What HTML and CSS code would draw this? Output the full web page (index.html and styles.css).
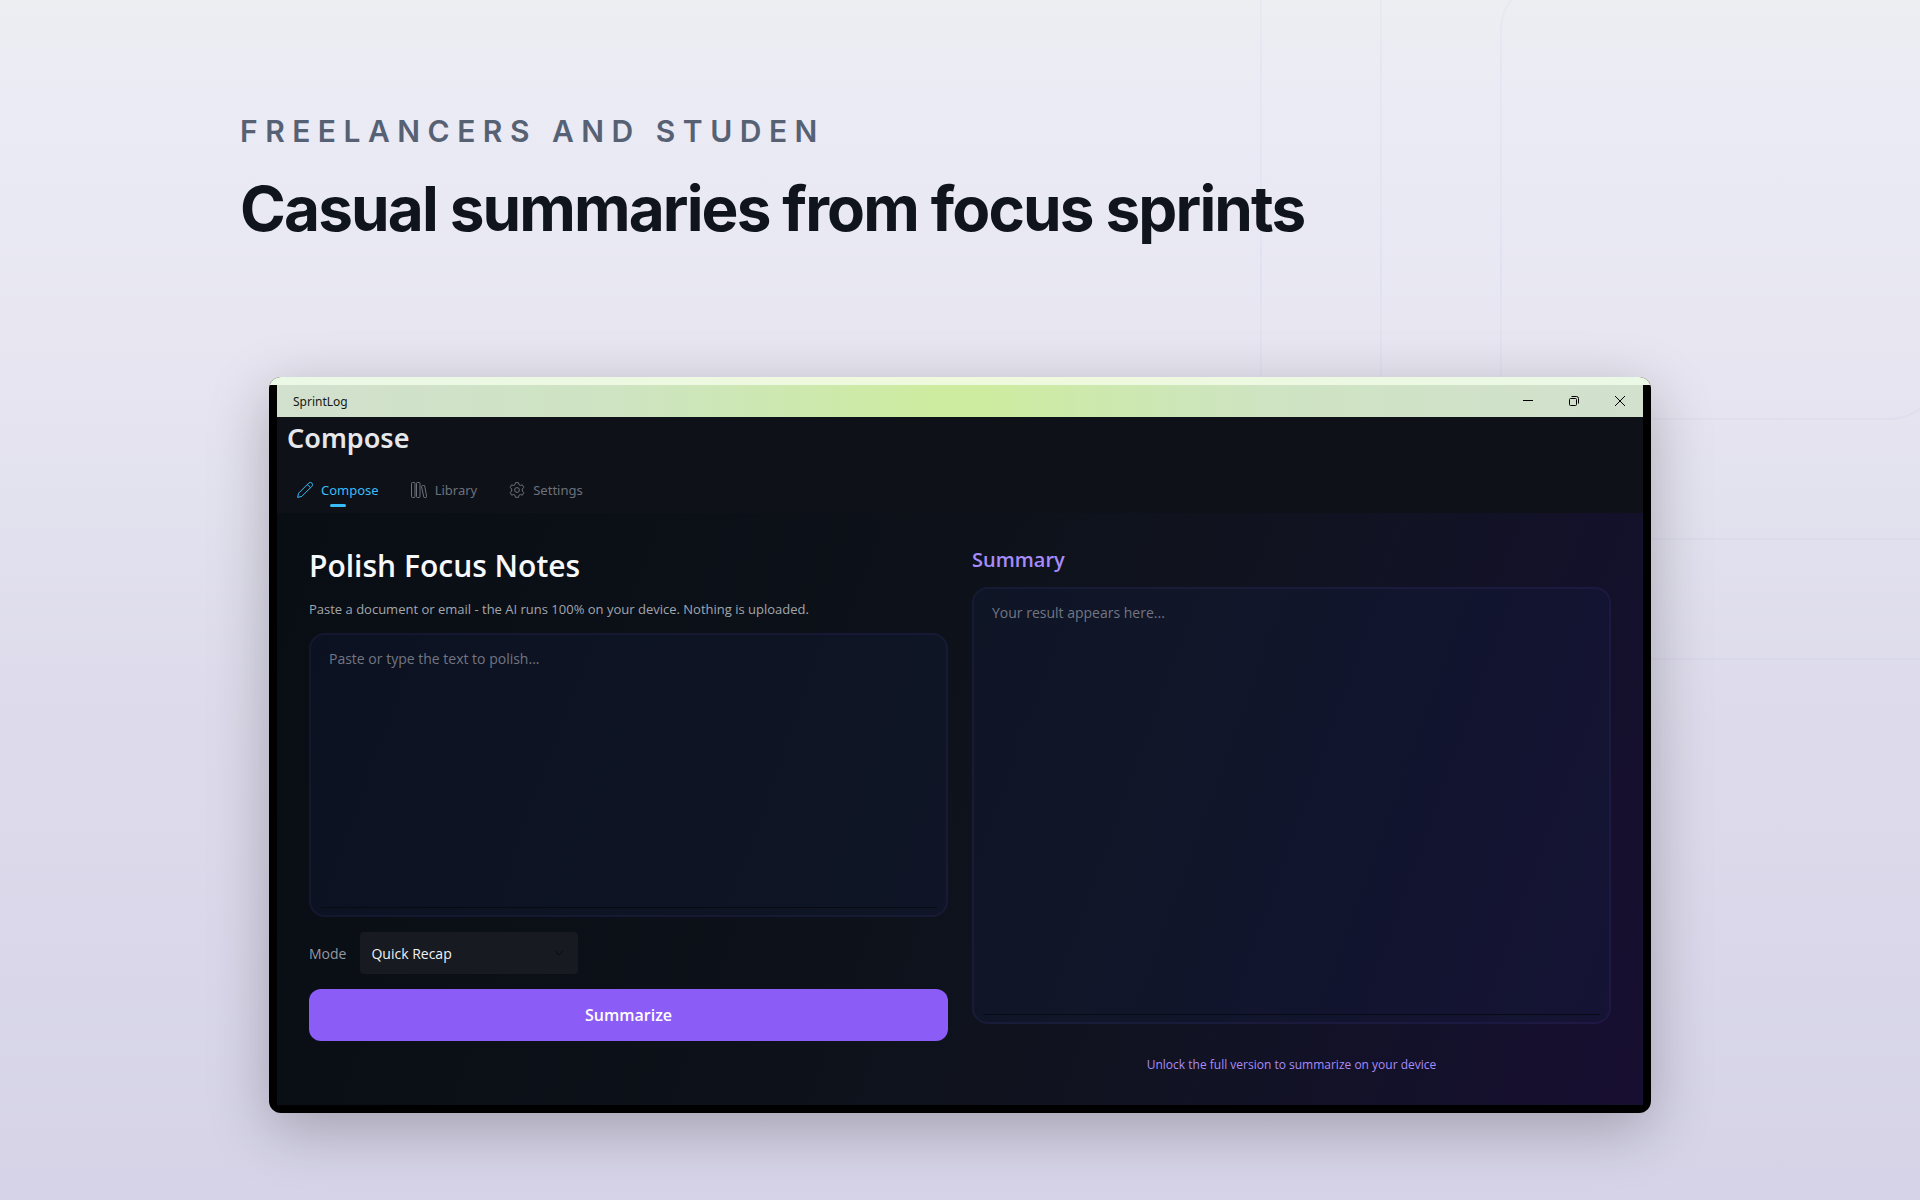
FILE: index.html
```html
<!DOCTYPE html>
<html lang="en">
<head>
<meta charset="utf-8">
<meta name="viewport" content="width=device-width, initial-scale=1">
<title>SprintLog</title>
<link rel="stylesheet" href="styles.css">
</head>
<body>
<div class="page">
  <div class="rings" aria-hidden="true"></div>
  <header class="intro">
    <p class="eyebrow">FREELANCERS AND STUDEN</p>
    <h1 class="headline">Casual summaries from focus sprints</h1>
  </header>
  <main class="window">
    <div class="window-top"></div>
    <div class="window-body">
      <div class="titlebar">
        <span class="app-name">SprintLog</span>
        <div class="controls">
          <button class="control" type="button" aria-label="Minimize"><svg viewBox="0 0 12 12"><path d="M1 5.5h10"/></svg></button>
          <button class="control" type="button" aria-label="Restore"><svg viewBox="0 0 12 12"><rect x="1.5" y="3.5" width="7" height="7" rx="1"/><path d="M3.5 1.5h5a2 2 0 0 1 2 2v5"/></svg></button>
          <button class="control" type="button" aria-label="Close"><svg viewBox="0 0 12 12"><path d="M1 1l10 10M11 1L1 11"/></svg></button>
        </div>
      </div>
      <div class="app-header">
        <h2 class="app-title">Compose</h2>
        <nav class="tabs">
          <a class="tab active" href="#compose"><svg viewBox="0 0 16 16"><path d="M.6 15.4l1-4.2L11.700 1.100a2 2 0 0 1 3.200 3.200L4.800 14.400zM10.300 2.500l3.200 3.200"/></svg>Compose</a>
          <a class="tab" href="#library"><svg viewBox="0 0 16 16"><rect x=".5" y=".5" width="3.500" height="15" rx=".9"/><rect x="5.500" y=".5" width="3.500" height="15" rx=".9"/><path d="M10.500 4.700a.8.8 0 0 1 .6-1l1.600-.3a.8.8 0 0 1 1 .6l1.900 10.400a.8.8 0 0 1-.6 1l-1.200.2a.8.8 0 0 1-1-.6z"/></svg>Library</a>
          <a class="tab" href="#settings"><svg viewBox="0 0 16 16"><path d="M6.500.7h3l.5 2 1.300.8 2-.7 1.500 2.600-1.500 1.600v2l1.500 1.600-1.500 2.600-2-.7-1.300.8-.5 2h-3l-.5-2-1.300-.8-2 .7-1.500-2.600L2.700 9V7L1.200 5.400l1.500-2.600 2 .7L6 2.700z"/><circle cx="8" cy="8" r="2.400"/></svg>Settings</a>
        </nav>
      </div>
      <div class="content">
        <section class="compose">
          <h3 class="heading"><label for="source">Polish Focus Notes</label></h3>
          <p class="hint">Paste a document or email - the AI runs 100% on your device. Nothing is uploaded.</p>
          <div class="editor"><textarea id="source" class="field" placeholder="Paste or type the text to polish..."></textarea></div>
          <div class="mode">
            <label class="mode-label" for="mode">Mode</label>
            <div class="picker">
              <select id="mode" class="select"><option>Quick Recap</option></select>
              <svg class="chevron" viewBox="0 0 10 10" aria-hidden="true"><path d="M1 3l4 4 4-4"/></svg>
            </div>
          </div>
          <button class="submit" type="button">Summarize</button>
        </section>
        <section class="result">
          <h3 class="subheading"><label for="summary">Summary</label></h3>
          <div class="editor"><textarea id="summary" class="field field-tall" placeholder="Your result appears here..." readonly></textarea></div>
          <a class="unlock" href="#unlock">Unlock the full version to summarize on your device</a>
        </section>
      </div>
    </div>
  </main>
</div>
</body>
</html>
```
FILE: styles.css
```css
* { box-sizing: border-box; }

body, h1, h2, h3, p { margin: 0; }

body { font-family: "Noto Sans", "Open Sans", sans-serif; }

.page {
  position: relative;
  min-height: 100vh;
  overflow: hidden;
  padding: 112px 0 80px;
  background: linear-gradient(180deg, #edeef2 0, #ebebf5 8%, #e7e6f1 28%, #dddbeb 60%, #d6d3e8 100%);
}

/* Concentric outlines in the upper right corner */
.rings {
  position: absolute;
  top: -20px;
  right: -20px;
  width: 440px;
  height: 440px;
  border: 2px solid rgba(99, 102, 241, 0.04);
  border-radius: 50px;
}
.rings::before,
.rings::after {
  content: "";
  position: absolute;
  inset: -122px;
  border: 2px solid rgba(99, 102, 241, 0.04);
  border-radius: 50px;
}
.rings::after { inset: -242px; }

.intro { position: relative; padding: 0 240px; }

.eyebrow {
  font: 600 30px/38px Inter, sans-serif;
  letter-spacing: 0.25em;
  color: #566174;
}

.headline {
  margin-top: 20px;
  font: 700 62px/78px Inter, sans-serif;
  letter-spacing: -0.03em;
  color: #10141c;
}

.window {
  position: relative;
  margin: 129px 269px 0;
  border-radius: 12px;
  overflow: hidden;
  box-shadow: 0 16px 60px rgba(0, 0, 0, 0.25);
  background: #000;
}

.window-top {
  height: 8px;
  background: linear-gradient(90deg, #eaf8e6, #eff9dc, #eaf8e6);
}

.window-body { padding: 0 8px 8px; }

.titlebar {
  display: flex;
  justify-content: space-between;
  align-items: center;
  height: 32px;
  padding-left: 16px;
  background: linear-gradient(90deg, #d2e0ce 0, #cee4c2 25%, #cdeca0 48%, #cdeca0 52%, #cee4c2 72%, #d2e0ce 100%);
}

.app-name { font-size: 12px; color: #141a14; }

.controls { display: flex; height: 100%; }

.control {
  display: grid;
  place-items: center;
  width: 46px;
  padding: 0;
  border: 0;
  background: none;
}
.control svg {
  width: 12px;
  height: 12px;
  fill: none;
  stroke: #000;
}

.app-header {
  height: 96px;
  padding: 2px 10px 0;
  background: #0e1118;
}

.app-title {
  font-size: 27px;
  line-height: 38px;
  font-weight: 600;
  color: #e6e7ea;
}

.tabs {
  display: flex;
  gap: 32px;
  margin-top: 13px;
  padding-left: 10px;
}

.tab {
  position: relative;
  display: flex;
  align-items: center;
  gap: 8px;
  height: 40px;
  font-size: 13px;
  color: #6d717b;
  text-decoration: none;
}
.tab svg {
  width: 16px;
  height: 16px;
  fill: none;
  stroke: currentColor;
}
.tab.active { color: #38bdf8; }
.tab.active::after {
  content: "";
  position: absolute;
  bottom: 3px;
  left: 50%;
  width: 16px;
  height: 3px;
  margin-left: -8px;
  border-radius: 2px;
  background: #38bdf8;
}

.content {
  display: grid;
  grid-template-columns: 1fr 1fr;
  gap: 24px;
  padding: 32px;
  font-family: "Open Sans", "Noto Sans", sans-serif;
  background: linear-gradient(110deg, #090d14 0, #0d121a 45%, #10131f 62%, #13112a 85%, #180e31 100%);
}

.compose, .result { display: flex; flex-direction: column; }

.heading {
  font-size: 30px;
  line-height: 42px;
  font-weight: 600;
  color: #f7f8fa;
}

.hint {
  margin: 12px 0 14px;
  font-size: 13px;
  line-height: 20px;
  color: #a2a6ae;
}

.editor { position: relative; display: flex; }
.editor::after {
  content: "";
  position: absolute;
  inset: auto 11px 9px;
  height: 1px;
  background: #080b14;
}

.field {
  width: 100%;
  height: 284px;
  padding: 14px 18px;
  border: 2px solid rgba(139, 92, 246, 0.08);
  border-radius: 16px;
  background: rgba(20, 30, 72, 0.25);
  font: 14px/20px "Open Sans", "Noto Sans", sans-serif;
  color: #e6e7ea;
  resize: none;
}
.field-tall { height: 437px; }
.field::placeholder { color: #727683; }

.mode {
  display: flex;
  align-items: center;
  gap: 14px;
  margin: 15px 0;
}

.mode-label { font-size: 14px; color: #9498a2; }

.picker { position: relative; }

.select {
  width: 218px;
  height: 42px;
  padding: 0 11px;
  appearance: none;
  border: 0;
  border-radius: 4px;
  background: #171a20;
  font: 14px "Open Sans", "Noto Sans", sans-serif;
  color: #f0f1f3;
}

.chevron {
  position: absolute;
  top: 16px;
  right: 14px;
  width: 10px;
  height: 10px;
  fill: none;
  stroke: #07090c;
  pointer-events: none;
}

.submit {
  height: 52px;
  border: 0;
  border-radius: 12px;
  background: #8b5cf6;
  font: 600 16px "Open Sans", "Noto Sans", sans-serif;
  color: #fff;
}

.subheading {
  margin-bottom: 12px;
  font-size: 20px;
  line-height: 30px;
  font-weight: 600;
  color: #a78bfa;
}

.unlock {
  margin-top: 32px;
  font-size: 12px;
  line-height: 17px;
  text-align: center;
  color: #a78bfa;
  text-decoration: none;
}
```
